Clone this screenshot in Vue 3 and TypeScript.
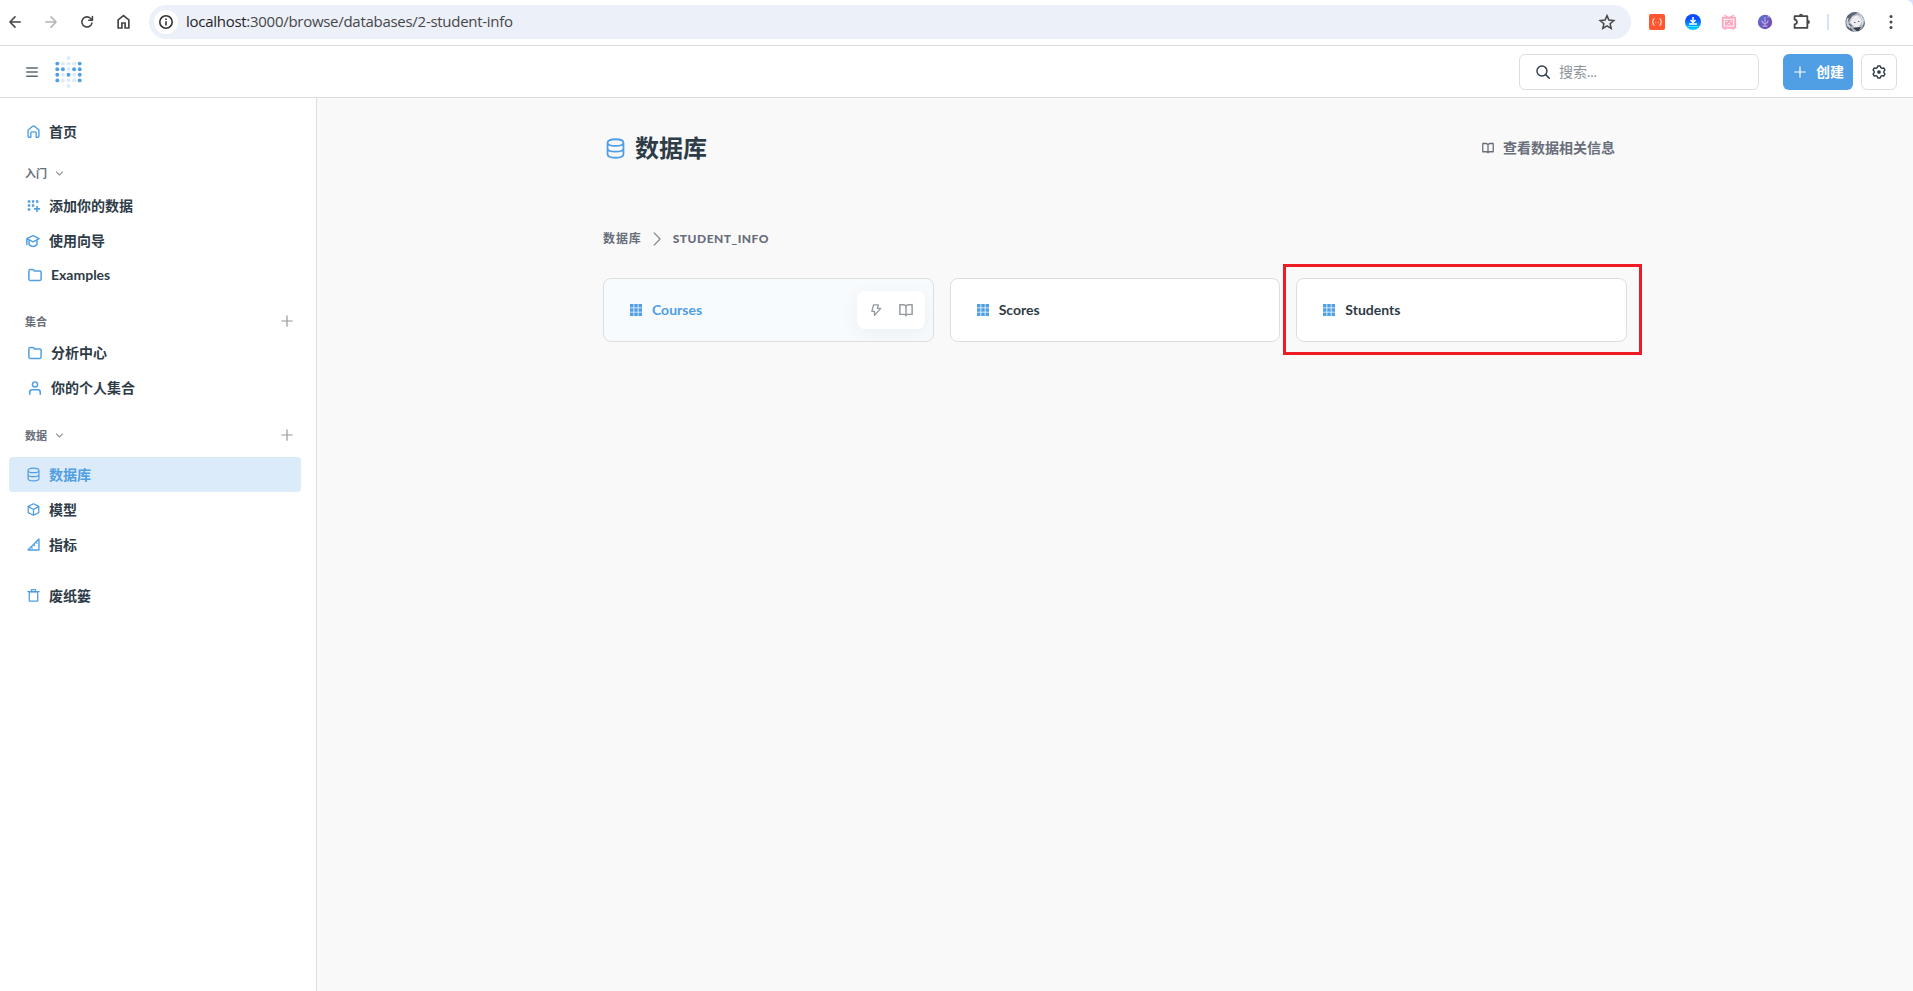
<script setup lang="ts">
import { h, type FunctionalComponent } from 'vue'

type Shape = [string, Record<string, string | number>]

const line = (d: string, w = 1.5): Shape => ['path', { d, fill: 'none', stroke: 'currentColor', 'stroke-width': w, 'stroke-linecap': 'round', 'stroke-linejoin': 'round' }]
const solid = (d: string): Shape => ['path', { d, fill: 'currentColor' }]
const ring = (cx: number, cy: number, r: number, w = 1.5): Shape => ['circle', { cx, cy, r, fill: 'none', stroke: 'currentColor', 'stroke-width': w }]

const gridPath = [0, 5.67, 11.33].flatMap((y) => [0, 5.67, 11.33].map((x) => `M${x} ${y}h4.67v4.67h-4.67z`)).join('')

const icons: Record<string, Shape[]> = {
  back: [line('M14 8H2.5M8 2.2L2.2 8L8 13.8', 1.8)],
  forward: [line('M2 8H13.5M8 2.2L13.8 8L8 13.8', 1.8)],
  reload: [line('M13.6 9.2A5.8 5.8 0 1 1 12.2 4L14 5.8M14.2 1.8V6H10', 1.8)],
  browserHome: [['path', { d: 'M2.3 14.9V6.2L8 1.7l5.700 4.500v8.700H9.700V9.600H6.300v5.300z', fill: 'none', stroke: 'currentColor', 'stroke-width': 1.8 }]],
  info: [ring(8, 8, 6.2, 1.6), solid('M7.200 7.200h1.600v4.300H7.200zM7.200 4.500h1.600v1.600H7.200z')],
  star: [['path', { d: 'M8 1.600l1.900 4.500 4.900.4-3.700 3.200 1.100 4.800L8 11.900l-4.200 2.600 1.100-4.800L1.200 6.500l4.900-.4z', fill: 'none', stroke: 'currentColor', 'stroke-width': 1.5 }]],
  puzzle: [['path', { d: 'M1.500 3h12v11h-12v-3.300q2.200-.3 2.200-2.200T1.500 6.300z', fill: 'none', stroke: 'currentColor', 'stroke-width': 1.7, 'stroke-linejoin': 'round' }], solid('M5.600 2.500a1.900 1.900 0 0 1 3.800 0zM14 6.600a1.900 1.900 0 0 1 0 3.800z')],
  burger: [line('M1 2.500h14M1 8h14M1 13.500h14', 2)],
  search: [ring(6.8, 6.8, 5.7, 1.6), line('M11 11l4.200 4.200', 1.7)],
  plus: [line('M8 1v14M1 8h14', 1.6)],
  gear: [line('M6.600 1.200h2.800l.7 1.900 1.300.7 2-.4 1.400 2.400-1.300 1.500v1.400l1.300 1.500-1.400 2.400-2-.4-1.300.7-.7 1.900H6.600l-.7-1.900-1.300-.7-2 .4-1.400-2.400 1.300-1.500V7.300L1.200 5.800l1.400-2.400 2 .4 1.300-.7z', 1.6), ['circle', { cx: 8, cy: 8, r: 2.1, fill: 'currentColor' }]],
  home: [line('M1.300 6.700v7.200q0 1.100 1.100 1.100h2.300V9.800q0-1.300 1.300-1.300h4q1.300 0 1.300 1.300V15h2.300q1.100 0 1.100-1.100V6.700q0-.5-.4-.9L8.700 1.300q-.7-.5-1.400 0L1.700 5.800q-.4.3-.4.9z', 1.7)],
  chevronDown: [line('M2.500 5.200L8 10.700l5.500-5.500', 2)],
  chevronRight: [line('M4.700 1l6.800 7-6.800 7', 1.4)],
  addData: [solid('M1 1.500h3v3H1zM6 1.500h3v3H6zM11 1.500h3v3h-3zM1 6.500h3v3H1zM6 6.500h3v3H6zM1 11.500h3v3H1zM11.300 8.500h2v2.700H16v2h-2.700V16h-2v-2.800H8.600v-2h2.700z')],
  cap: [line('M8 1.900l7 3.400-7 3.700-7-3.700zM1 5.600v6.400M3.500 7.500v4.600q4.500 4.200 9 0V7.500', 1.7)],
  folder: [line('M1 3.300q0-1.500 1.500-1.500h3.100q.6 0 .9.500l.9 1.200h6.200q1.400 0 1.400 1.400v7.800q0 1.500-1.500 1.500h-11Q1 14.200 1 12.700z', 1.7)],
  person: [ring(8, 3.900, 2.900, 1.7), line('M2 15v-2.200Q2 10 4.800 10h6.400Q14 10 14 12.800V15', 1.8)],
  database: [line('M1.300 3.100Q1.300.2 8 .2t6.700 2.900v9.800Q14.700 15.800 8 15.800t-6.700-2.900zM1.300 3.100Q1.300 5.800 8 5.800t6.700-2.700M1.300 8q0 2.700 6.700 2.700T14.700 8', 1.500)],
  cube: [line('M8 .9l6.500 3.300v7.600L8 15.100l-6.500-3.300V4.200zM1.800 4.400L8 8l6.200-3.600M8 8v6.800', 1.6)],
  ruler: [line('M14.700 1.300v13.400H1.300zM5 11l1.300 1.300M8 8l1.300 1.300M11 5l1.300 1.300', 1.7)],
  trash: [line('M2.800 3.400h10.400v11.500H2.800z', 1.6), line('M1 3.200h14M5.500 2.800V.9h5v1.900', 1.5)],
  grid: [solid(gridPath)],
  bolt: [line('M4.700 1.200h6.500L9.800 5.800h4.500L6 15.200V9.900H2.500z', 1.8)],
  book: [line('M8 3.800Q7.200 2 5.200 2H1v11h5.200q1.200 0 1.800 1.400.6-1.400 1.800-1.400H15V2h-4.200Q8.800 2 8 3.800v10.400', 1.700)],
}

const Icon: FunctionalComponent<{ name: string; size?: number }> = (props) =>
  h(
    'svg',
    { class: 'icon', viewBox: '0 0 16 16', width: props.size ?? 12, height: props.size ?? 12, 'aria-hidden': 'true' },
    icons[props.name].map(([tag, attrs]) => h(tag, attrs)),
  )
Icon.props = ['name', 'size']

interface NavItem { label: string; icon: string; nested?: boolean; active?: boolean; size?: number }
interface NavGroup { key: string; title?: string; fold?: boolean; add?: boolean; items: NavItem[] }

const groups: NavGroup[] = [
  { key: 'home', items: [{ label: '首页', icon: 'home' }] },
  {
    key: 'start', title: '入门', fold: true,
    items: [
      { label: '添加你的数据', icon: 'addData' },
      { label: '使用向导', icon: 'cap', size: 14 },
      { label: 'Examples', icon: 'folder', nested: true },
    ],
  },
  {
    key: 'collections', title: '集合', add: true,
    items: [
      { label: '分析中心', icon: 'folder', nested: true },
      { label: '你的个人集合', icon: 'person', nested: true },
    ],
  },
  {
    key: 'data', title: '数据', fold: true, add: true,
    items: [
      { label: '数据库', icon: 'database', active: true },
      { label: '模型', icon: 'cube' },
      { label: '指标', icon: 'ruler' },
    ],
  },
  { key: 'trash', items: [{ label: '废纸篓', icon: 'trash' }] },
]

const tables = [
  { name: 'Courses', hover: true },
  { name: 'Scores' },
  { name: 'Students', marked: true },
]

const logoRows = ['..o..', 'xooox', 'xxoxx', 'xoxox', 'xooox', '..o..']
const logoDots = logoRows.flatMap((row, y) =>
  [...row].map((c, x) => ({ c, x: 2 + x * 5.6, y: 2 + y * 5.6, key: `${x}-${y}` })).filter((d) => d.c !== '.'),
)
</script>

<template>
  <div class="window">
    <div class="chrome">
      <div class="nav-buttons">
        <Icon name="back" :size="14" />
        <Icon class="dim" name="forward" :size="14" />
        <Icon name="reload" :size="14" />
        <Icon name="browserHome" :size="15" />
      </div>
      <div class="omnibox">
        <span class="site-info"><Icon name="info" :size="16" /></span>
        <span class="url"><b>localhost</b>:3000/browse/databases/2-student-info</span>
        <Icon class="star" name="star" :size="16" />
      </div>
      <div class="extensions">
        <svg width="16" height="16" viewBox="0 0 16 16">
          <rect width="16" height="16" rx="2" fill="#ff5630" />
          <path d="M5.600 4.700H5q-.8 0-.8.900v1.500l-.9.900.9.900v1.500q0 .9.800.9h.6M10.400 4.700h.6q.8 0 .8.900v1.500l.9.900-.9.900v1.500q0 .9-.8.900h-.6M6.400 8.700h.8M8.800 8.700h.8" fill="none" stroke="#fff" />
        </svg>
        <svg width="16" height="16" viewBox="0 0 16 16">
          <defs><linearGradient id="dl" x2="0" y2="1"><stop offset=".3" stop-color="#0a4dff" /><stop offset="1" stop-color="#00d5ff" /></linearGradient></defs>
          <circle cx="8" cy="8" r="8" fill="url(#dl)" />
          <path d="M8 3v4.500M5.500 6L8 8.500 10.500 6M4 10h8" fill="none" stroke="#fff" stroke-width="1.500" />
          <path d="M2.500 12.500h11" stroke="#42e5ff" />
        </svg>
        <svg width="16" height="16" viewBox="0 0 16 16" fill="none" stroke="#ffa3bd">
          <path d="M3.500 1L7 3.500M13 1L9 3.500M4 14v2M12 14v2" stroke-width="1.300" />
          <rect x="1.500" y="3.500" width="13" height="10.500" rx="1" fill="#ffc4d4" stroke-width="1.300" />
          <rect x="3.500" y="5.500" width="9" height="6.500" fill="#ffa3bd" stroke="#fff" stroke-width=".8" />
          <path d="M4.800 8l2-1M11.200 8l-2-1M6.500 10.300L8 9.300l1.500 1" stroke="#fff" />
        </svg>
        <svg width="16" height="16" viewBox="0 0 16 16">
          <defs><linearGradient id="mic" x2="1" y2="1"><stop stop-color="#5a77d6" /><stop offset="1" stop-color="#7642a8" /></linearGradient></defs>
          <circle cx="8" cy="8" r="7.200" fill="url(#mic)" />
          <path d="M8 3v5M5 6.500q0 2.800 3 2.800t3-2.800M8 9.500V12M5.500 12.200h5M10.500 3.500L13 2" fill="none" stroke="#b9a9e4" stroke-width="1.200" />
        </svg>
        <Icon name="puzzle" :size="17" />
      </div>
      <i class="divider"></i>
      <svg class="avatar" width="20" height="20" viewBox="0 0 20 20">
        <defs><clipPath id="face"><circle cx="10" cy="10" r="10" /></clipPath></defs>
        <g clip-path="url(#face)">
          <path d="M0 0h20v20H0z" fill="#aeb4c0" />
          <path d="M2 4l5-4h7l-7 4-4 6-2 4zM0 14l5 1 4 5H2zM17 16l3-7v10h-7z" fill="#5d6574" />
          <path d="M8 5q4-3 7 0l2 4-3 6-5 0-4-5z" fill="#f0eef2" />
          <path d="M3 6l-1 5 3 5M15 3l3 5-1 5M9 4L6 8M12 3l3 4" fill="none" stroke="#dfe2e9" stroke-width="1.200" />
          <path d="M9 10.500h1.500M13 9.500h1.500M4 12l3 2" stroke="#5d6274" stroke-width="1.100" />
          <path d="M8 16l5 4 3-5" fill="#343b49" />
        </g>
      </svg>
      <svg class="more" width="4" height="16" viewBox="0 0 4 16" fill="#474747"><circle cx="2" cy="2.500" r="1.500" /><circle cx="2" cy="8" r="1.500" /><circle cx="2" cy="13.500" r="1.500" /></svg>
    </div>

    <header class="appbar">
      <Icon class="burger" name="burger" />
      <svg class="logo" width="27" height="32" viewBox="0 0 26.400 32">
        <circle v-for="d in logoDots" :key="d.key" :cx="d.x" :cy="d.y" r="1.950" :class="d.c === 'x' ? 'dot-on' : 'dot-off'" />
      </svg>
      <div class="search"><Icon name="search" :size="14" /><span>搜索...</span></div>
      <button class="create"><Icon name="plus" :size="12" /><span>创建</span></button>
      <button class="settings"><Icon name="gear" :size="14" /></button>
    </header>

    <div class="body">
      <nav class="sidebar">
        <section v-for="g in groups" :key="g.key" :class="g.key">
          <h4 v-if="g.title">
            <span>{{ g.title }}</span>
            <Icon v-if="g.fold" class="fold" name="chevronDown" :size="9" />
            <Icon v-if="g.add" class="add" name="plus" :size="12" />
          </h4>
          <a v-for="item in g.items" :key="item.label" :class="{ nested: item.nested, active: item.active }">
            <span class="slot"><Icon :name="item.icon" :size="item.size ?? (item.nested ? 14 : 13)" /></span>{{ item.label }}
          </a>
        </section>
      </nav>

      <main>
        <div class="content">
          <div class="title-row">
            <Icon class="title-icon" name="database" :size="19" />
            <h1>数据库</h1>
            <a class="learn"><Icon name="book" :size="12" />查看数据相关信息</a>
          </div>
          <div class="crumbs">
            <span class="root">数据库</span>
            <Icon class="sep" name="chevronRight" :size="14" />
            <span class="current">STUDENT_INFO</span>
          </div>
          <div class="cards">
            <div v-for="t in tables" :key="t.name" class="card" :class="{ hover: t.hover, marked: t.marked }">
              <Icon class="grid-icon" name="grid" />
              <span>{{ t.name }}</span>
              <div v-if="t.hover" class="actions"><Icon name="bolt" /><Icon name="book" :size="14" /></div>
            </div>
          </div>
        </div>
      </main>
    </div>
  </div>
</template>

<style>
body { background: #fff; overflow: hidden; }
.icon { flex: none; display: block; overflow: visible; }
</style>

<style scoped>
* { box-sizing: border-box; }
.window {
  width: 100vw; height: 100vh; display: flex; flex-direction: column; overflow: hidden;
  font-family: Lato, "Noto Sans CJK SC", sans-serif; font-size: 14px; color: #2e3c48; background: #d3e3fd;
}
.chrome { height: 46px; flex: none; display: flex; align-items: center; padding: 0 20px 2px 8px; border-bottom: 1px solid #dcdcdc; border-top-right-radius: 7px; color: #474747; background: #fff; }
.nav-buttons { width: 141px; display: flex; align-items: center; gap: 22px; }
.dim { color: #b4b4b4; }
.omnibox { width: 1482px; height: 34px; flex: none; border-radius: 17px; background: #ecf0f9; display: flex; align-items: center; padding: 0 16px 0 5px; }
.site-info { width: 24px; height: 24px; border-radius: 50%; background: #fff; display: flex; align-items: center; justify-content: center; color: #333; }
.url { margin-left: 8px; padding-bottom: 2px; font: 15px/20px "Open Sans", sans-serif; letter-spacing: -.28px; color: #474747; white-space: nowrap; }
.url b { font-weight: 400; color: #1f1f1f; }
.star { margin-left: auto; }
.extensions { display: flex; align-items: center; gap: 20px; margin-left: 18px; }
.divider { width: 2px; height: 16px; background: #d3e3fd; margin-left: 17px; }
.avatar { margin-left: 16px; }
.more { margin-left: auto; }

.appbar { height: 52px; flex: none; display: flex; align-items: center; padding: 0 16px 0 26px; border-bottom: 1px solid #dcdfe0; background: #fff; }
.burger { color: #5a6872; }
.logo { margin-left: 17px; }
.dot-on { fill: #509ee3; }
.dot-off { fill: #dcebf9; }
.search { margin-left: auto; width: 240px; height: 36px; border: 1px solid #dcdfe0; border-radius: 6px; display: flex; align-items: center; padding-left: 16px; gap: 9px; color: #2e3c48; }
.search span { color: #8d9399; padding-bottom: 2px; }
.create { margin-left: 24px; width: 70px; height: 36px; border: 0; border-radius: 6px; background: #509ee3; color: #fff; display: flex; align-items: center; padding: 0 0 0 11px; gap: 10px; font: 700 14px/20px Lato, "Noto Sans CJK SC", sans-serif; }
.settings { margin-left: 8px; width: 36px; height: 36px; border: 1px solid #dcdfe0; border-radius: 6px; background: #fff; color: #2e3c48; display: flex; align-items: center; justify-content: center; padding: 0; }

.body { flex: 1; display: flex; min-height: 0; }
.sidebar { width: 317px; flex: none; border-right: 1px solid #dcdfe0; padding: 16px 15px 0 9px; background: #fff; }
.sidebar a { height: 35px; display: flex; align-items: center; padding-left: 17px; border-radius: 4px; font-weight: 700; line-height: 20px; color: #2e3c48; }
.sidebar a.nested { padding-left: 19px; }
.slot { width: 14px; margin-right: 9px; display: flex; justify-content: center; color: #509ee3; }
.sidebar a.active { background: #dcebf9; color: #509ee3; }
h4 { margin: 0; height: 20px; display: flex; align-items: center; padding: 0 8px 0 16px; font-size: 11px; font-weight: 700; line-height: 18px; color: #696e7b; }
h4 span { padding-top: 2px; }
.fold { margin-left: 8px; color: #8d949a; }
.add { margin-left: auto; color: #949a9f; }
.start h4 { margin: 14px 0 5px; }
.start a:last-child { height: 34px; }
.collections h4 { margin: 19px 0 4px; }
.data h4 { margin: 20px 0 12px; }
.trash { margin-top: 16px; }

main { flex: 1; background: #f9f9f9; display: flex; justify-content: center; }
.content { width: 1024px; padding-top: 35px; }
.title-row { height: 30px; display: flex; align-items: center; padding: 0 12px 0 3px; }
.title-icon { color: #509ee3; }
h1 { margin: 0 0 0 10px; font-size: 24px; line-height: 30px; font-weight: 700; }
.learn { margin-left: auto; display: flex; align-items: center; gap: 9px; font-weight: 700; line-height: 20px; color: #696e7b; }
.crumbs { margin-top: 66px; height: 20px; display: flex; align-items: center; font-size: 12px; line-height: 20px; font-weight: 700; letter-spacing: .5px; color: #696e7b; }
.crumbs .root { letter-spacing: .9px; }
.crumbs .sep { margin: 0 9px 0 8px; color: #7f868e; }
.crumbs .current { font-weight: 900; }
.cards { margin-top: 29px; display: grid; grid-template-columns: repeat(3, 1fr); gap: 16px; }
.card { position: relative; height: 64px; border: 1px solid #dcdfe0; border-radius: 8px; background: #fff; display: flex; align-items: center; padding: 0 8px 0 26px; gap: 10px; font-weight: 700; line-height: 20px; }
.card.hover { background: #f7fbfe; color: #509ee3; overflow: hidden; }
.grid-icon { color: #509ee3; }
.actions { margin-left: auto; width: 68px; height: 38px; border-radius: 8px; background: #fff; box-shadow: 0 4px 20px rgba(0, 0, 0, .05); display: flex; align-items: center; padding-left: 13px; gap: 17px; color: #949a9f; }
.marked::after { content: ""; position: absolute; inset: -15px -16px -14px -14px; border: 3px solid #ed1c24; }
</style>
